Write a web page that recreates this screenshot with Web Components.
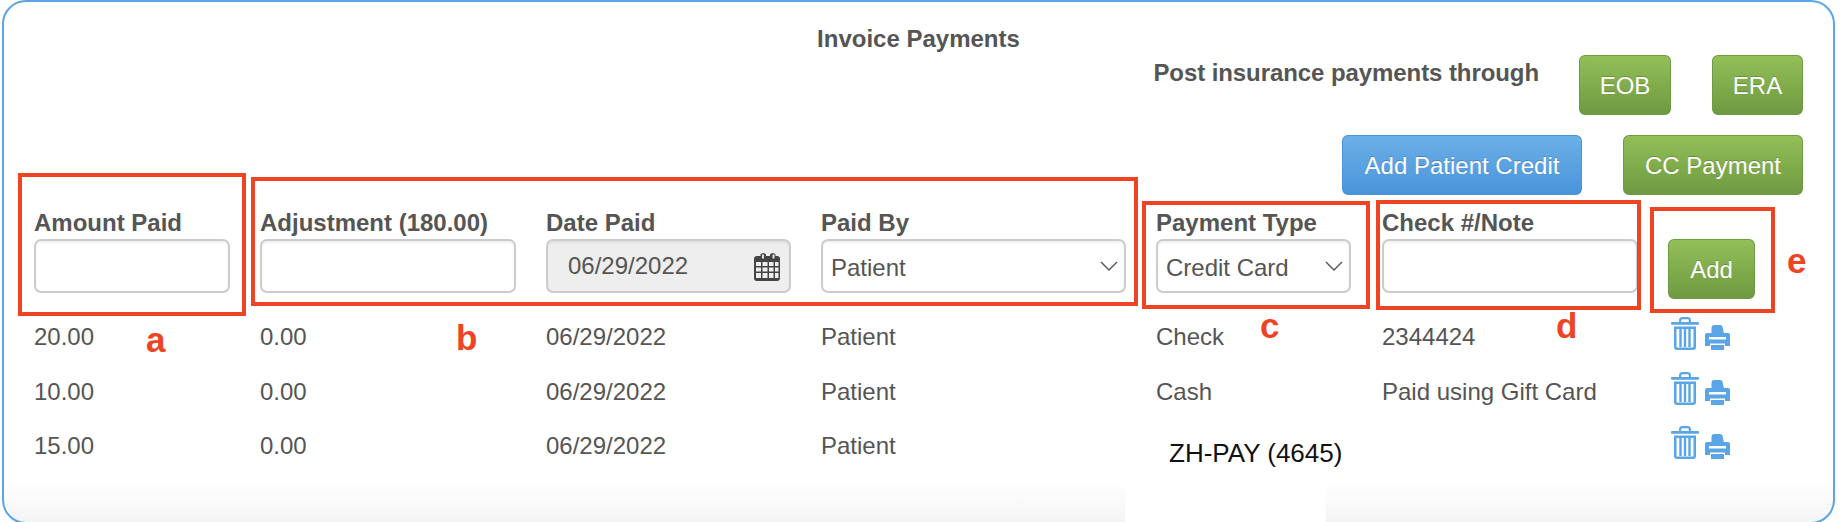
<!DOCTYPE html>
<html lang="en">
<head>
<meta charset="utf-8">
<title>Invoice Payments</title>
<style>
  html, body { margin: 0; background: #fff; }
  body { position: relative; width: 1846px; height: 522px; overflow: hidden; font: 24px "Liberation Sans", Arial, sans-serif; color: #555; }
</style>
</head>
<body>
<invoice-panel>
  <span slot="title">Invoice Payments</span>

  <insurance-bar slot="head">
    <pay-button slot="eob">EOB</pay-button>
    <pay-button slot="era">ERA</pay-button>
  </insurance-bar>
  <div slot="head" style="display:flex;justify-content:flex-end;gap:41px;margin-top:20px;">
    <pay-button tone="blue" style="width:240px">Add Patient Credit</pay-button>
    <pay-button style="width:180px">CC Payment</pay-button>
  </div>

  <payment-form slot="form"></payment-form>

  <payment-row slot="rows" amount="20.00" adjustment="0.00" date="06/29/2022" by="Patient" type="Check" note="2344424"></payment-row>
  <payment-row slot="rows" amount="10.00" adjustment="0.00" date="06/29/2022" by="Patient" type="Cash" note="Paid using Gift Card"></payment-row>
  <payment-row slot="rows" amount="15.00" adjustment="0.00" date="06/29/2022" by="Patient"></payment-row>
</invoice-panel>

<!-- annotations pasted over the screenshot -->
<note-patch x="1125" y="430" w="201" h="92"></note-patch>
<note-label x="1169" y="438" size="26" color="#111" weight="400">ZH-PAY (4645)</note-label>

<note-box x="18" y="173" w="228" h="143"></note-box>
<note-box x="251" y="177" w="887" h="129"></note-box>
<note-box x="1142" y="201" w="228" h="108"></note-box>
<note-box x="1376" y="200" w="265" h="110"></note-box>
<note-box x="1650" y="207" w="125" h="106"></note-box>
<note-label x="146" y="319" size="35">a</note-label>
<note-label x="456" y="317" size="35">b</note-label>
<note-label x="1260" y="305" size="35">c</note-label>
<note-label x="1556" y="305" size="35">d</note-label>
<note-label x="1787" y="240" size="35">e</note-label>

<script>
"use strict";

const COLUMNS = "226px 286px 275px 335px 226px 286px 136px";

class InvoicePanel extends HTMLElement {
  constructor() {
    super();
    let shadowRoot = this.attachShadow({ mode: "open" });
    shadowRoot.innerHTML = `
      <style>
        :host {
          display: block;
          box-sizing: border-box;
          width: 1833px;
          height: 524px;
          margin-left: 2px;
          padding: 24px 30px 0 30px;
          border: 2px solid #5aa5e5;
          border-radius: 24px;
          background: linear-gradient(#fff 0, #fff 480px, #f4f4f4 100%);
        }
        #title {
          text-align: center;
          font-weight: bold;
          line-height: 28px;
          margin-top: -1px;
        }
        #head { margin-top: 2px; }
        #form { margin-top: 14px; }
      </style>
      <div id="title"><slot name="title"></slot></div>
      <div id="head"><slot name="head"></slot></div>
      <div id="form"><slot name="form"></slot></div>
      <div id="rows"><slot name="rows"></slot></div>
    `;
  }
}
customElements.define("invoice-panel", InvoicePanel);

class PayButton extends HTMLElement {
  constructor() {
    super();
    let shadowRoot = this.attachShadow({ mode: "open" });
    shadowRoot.innerHTML = `
      <style>
        :host {
          display: flex;
          align-items: center;
          justify-content: center;
          box-sizing: border-box;
          height: 60px;
          padding-top: 2px;
          border: 1px solid #6d9a42;
          border-bottom-width: 2px;
          border-radius: 6px;
          color: #fff;
          background: linear-gradient(#93bf58, #6f9a41);
          text-shadow: 0 -1px 0 rgba(0, 0, 0, 0.2);
        }
        :host([tone="blue"]) {
          border-color: #4a94d9;
          background: linear-gradient(#6cb0e7, #4a94da);
        }
      </style>
      <slot></slot>
    `;
  }
}
customElements.define("pay-button", PayButton);

class InsuranceBar extends HTMLElement {
  constructor() {
    super();
    let shadowRoot = this.attachShadow({ mode: "open" });
    shadowRoot.innerHTML = `
      <style>
        :host { display: flex; justify-content: flex-end; align-items: flex-start; }
        #text { font-weight: bold; padding-top: 4px; line-height: 28px; margin-right: 40px; letter-spacing: -0.08px; }
        ::slotted([slot="eob"]) { width: 92px; margin-right: 41px; }
        ::slotted([slot="era"]) { width: 91px; }
      </style>
      <div id="text">Post insurance payments through</div>
      <slot name="eob"></slot>
      <slot name="era"></slot>
    `;
  }
}
customElements.define("insurance-bar", InsuranceBar);

class PaymentForm extends HTMLElement {
  constructor() {
    super();
    let shadowRoot = this.attachShadow({ mode: "open" });
    shadowRoot.innerHTML = `
      <style>
        :host {
          display: grid;
          grid-template-columns: ${COLUMNS};
          align-items: start;
        }
        label { display: block; font-weight: bold; line-height: 27px; height: 30px; }
        .control {
          display: flex;
          align-items: center;
          justify-content: space-between;
          box-sizing: border-box;
          width: 100%;
          height: 54px;
          border: 2px solid #ccc;
          border-radius: 7px;
          background: #fff;
          box-shadow: inset 0 2px 2px rgba(0, 0, 0, 0.06);
          font: inherit;
          color: inherit;
          padding: 0 8px;
        }
        input.control { outline: none; }
        select.control {
          appearance: none;
          padding-top: 2px;
          background: #fff url("data:image/svg+xml,%3Csvg xmlns='http://www.w3.org/2000/svg' width='18' height='10'%3E%3Cpath d='M1 1l8 8 8-8' fill='none' stroke='%23555' stroke-width='1.4'/%3E%3C/svg%3E") no-repeat right 6px center;
        }
        #date { background: #eee; padding: 0 8px 0 20px; }
      </style>
      <div style="width:196px"><label>Amount Paid</label><input class="control" type="text" aria-label="Amount Paid"></div>
      <div style="width:256px"><label>Adjustment (180.00)</label><input class="control" type="text" aria-label="Adjustment"></div>
      <div style="width:245px"><label>Date Paid</label>
        <div class="control" id="date">06/29/2022
          <svg width="28" height="29" viewBox="0 0 28 29">
            <path fill="#444" d="M5 4h1.500V2.500a3 2.500 0 0 1 5.500 0V4h4V2.500a3 2.500 0 0 1 5.500 0V4H23a3 3 0 0 1 3 3v19a3 3 0 0 1-3 3H3a3 3 0 0 1-3-3V7a3 3 0 0 1 3-3z" transform="translate(1 0)"/>
            <path fill="#e4e4e4" d="M9 3.200a1 1 0 0 1 2 0V6.500H9zM19.500 3.200a1 1 0 0 1 2 0V6.500h-2z"/>
            <path fill="#eee" d="M3 10h5v4H3zM9.500 10h5v4h-5zM16 10h4.500v4H16zM22 10h3.500v4H22zM3 15.500h5v4H3zM9.500 15.500h5v4h-5zM16 15.500h4.500v4H16zM22 15.500h3.500v4H22zM3 21h5v5H3zM9.500 21h5v5h-5zM16 21h4.500v5H16zM22 21h3.500v5H22z"/>
          </svg>
        </div>
      </div>
      <div style="width:305px"><label>Paid By</label>
        <select class="control" aria-label="Paid By"><option>Patient</option><option>Insurance</option></select>
      </div>
      <div style="width:195px"><label>Payment Type</label>
        <select class="control" aria-label="Payment Type"><option>Credit Card</option><option>Check</option><option>Cash</option></select>
      </div>
      <div style="width:256px"><label>Check #/Note</label><input class="control" type="text" aria-label="Check or note"></div>
      <div style="padding-top:30px"><pay-button style="width:87px">Add</pay-button></div>
    `;
  }
}
customElements.define("payment-form", PaymentForm);

class RowActions extends HTMLElement {
  constructor() {
    super();
    let shadowRoot = this.attachShadow({ mode: "open" });
    shadowRoot.innerHTML = `
      <style>
        :host { display: flex; align-items: flex-end; gap: 6px; margin-left: 3px; margin-top: 18px; height: 33px; color: #5aa5e5; }
        svg { display: block; fill: currentColor; }
      </style>
      <svg width="28" height="33" viewBox="0 0 28 33" aria-label="Delete">
        <path d="M8 5V3.500A3.500 3.500 0 0 1 11.500 0h5A3.500 3.500 0 0 1 20 3.500V5h-2.200V3.500a1.300 1.300 0 0 0-1.300-1.300h-5a1.300 1.300 0 0 0-1.300 1.300V5z"/>
        <rect y="5" width="28" height="2.800" rx="1"/>
        <path fill-rule="evenodd" d="M3 9.500h22V30a3 3 0 0 1-3 3H6a3 3 0 0 1-3-3zM5.500 12v18a.5.5 0 0 0 .5.5h16a.5.5 0 0 0 .5-.5V12z"/>
        <path d="M8.300 12h2.400v18H8.300zM12.800 12h2.400v18h-2.400zM17.300 12h2.400v18h-2.400z"/>
      </svg>
      <svg width="25" height="25" viewBox="0 0 25 25" aria-label="Print">
        <path d="M6.500 9V3a3 3 0 0 1 3-3h5a3 3 0 0 1 3 1.500L19 9z"/>
        <path fill-rule="evenodd" d="M0 10a2 2 0 0 1 2-2h21a2 2 0 0 1 2 2v11h-5v-2.500H5V21H0zM4 12v2.500h17V12z"/>
        <path d="M6 20h13v5H6z"/>
      </svg>
    `;
  }
}
customElements.define("row-actions", RowActions);

class PaymentRow extends HTMLElement {
  constructor() {
    super();
    let shadowRoot = this.attachShadow({ mode: "open" });
    let cells = ["amount", "adjustment", "date", "by", "type", "note"]
      .map((name) => `<div>${this.getAttribute(name) || ""}</div>`)
      .join("");
    shadowRoot.innerHTML = `
      <style>
        :host {
          display: grid;
          grid-template-columns: ${COLUMNS};
          height: 54.5px;
          line-height: 28px;
        }
        div { padding-top: 24px; }
      </style>
      ${cells}
      <row-actions></row-actions>
    `;
  }
}
customElements.define("payment-row", PaymentRow);

// overlays: the red review marks sit on top of the panel
class NoteBox extends HTMLElement {
  constructor() {
    super();
    this.attachShadow({ mode: "open" }).innerHTML = `
      <style>
        :host { position: absolute; box-sizing: border-box; border: 4px solid #ee4423; }
      </style>
    `;
  }
  connectedCallback() {
    this.style.left = this.getAttribute("x") + "px";
    this.style.top = this.getAttribute("y") + "px";
    this.style.width = this.getAttribute("w") + "px";
    this.style.height = this.getAttribute("h") + "px";
  }
}
customElements.define("note-box", NoteBox);

class NotePatch extends NoteBox {
  constructor() {
    super();
    this.shadowRoot.innerHTML = `<style>:host { position: absolute; background: #fff; }</style>`;
  }
}
customElements.define("note-patch", NotePatch);

class NoteLabel extends HTMLElement {
  constructor() {
    super();
    this.attachShadow({ mode: "open" }).innerHTML = `
      <style>
        :host { position: absolute; color: #ee4423; font-weight: bold; line-height: 1.2; white-space: nowrap; }
      </style>
      <slot></slot>
    `;
  }
  connectedCallback() {
    this.style.left = this.getAttribute("x") + "px";
    this.style.top = this.getAttribute("y") + "px";
    this.style.fontSize = this.getAttribute("size") + "px";
    if (this.hasAttribute("color")) this.style.color = this.getAttribute("color");
    if (this.hasAttribute("weight")) this.style.fontWeight = this.getAttribute("weight");
  }
}
customElements.define("note-label", NoteLabel);
</script>
</body>
</html>
